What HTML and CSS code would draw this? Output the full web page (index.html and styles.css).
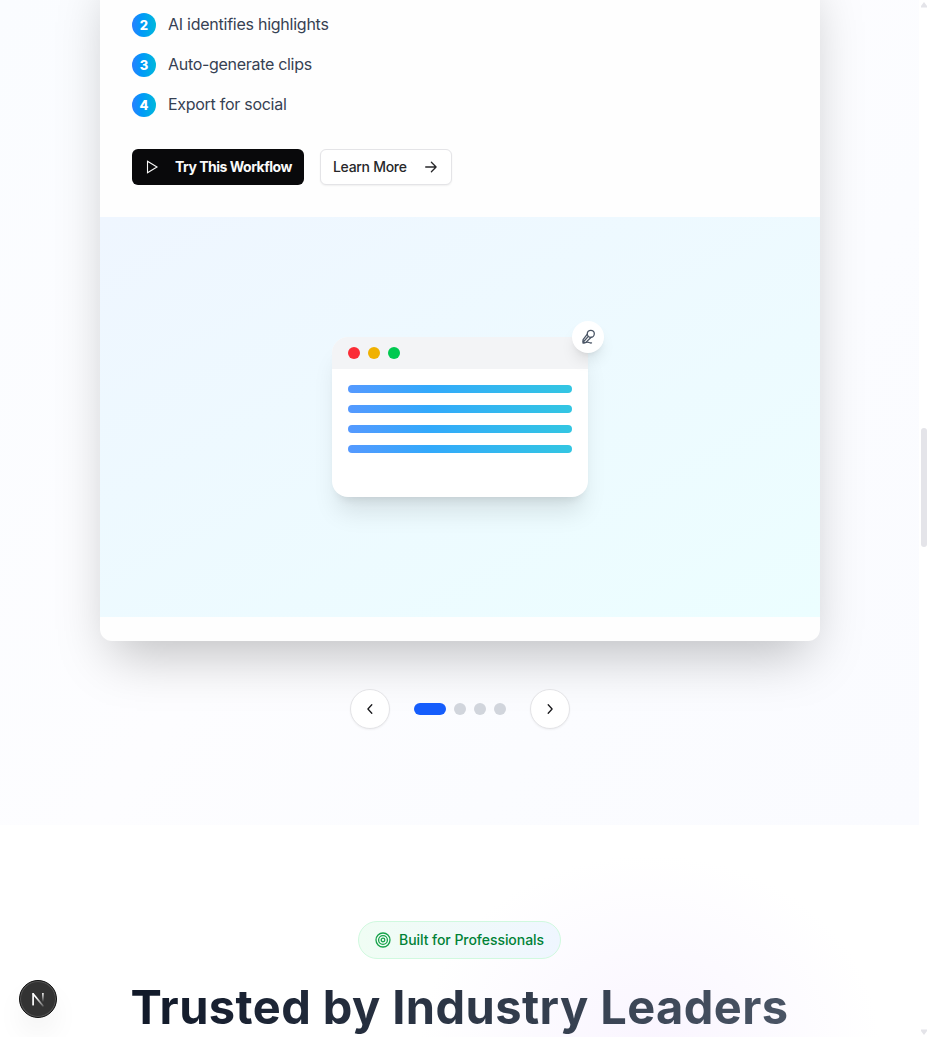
FILE: index.html
```html
<!DOCTYPE html>
<html lang="en">
<head>
<meta charset="utf-8">
<title>Workflows</title>
<link rel="stylesheet" href="styles.css">
</head>
<body>
<div class="page">
  <main class="content">
    <section class="workflows">
      <article class="card">
        <div class="card-body">
          <ol class="steps">
            <li><span class="num">2</span><span class="s1">AI identifies highlights</span></li>
            <li><span class="num">3</span><span class="s2">Auto-generate clips</span></li>
            <li><span class="num">4</span><span class="s3">Export for social</span></li>
          </ol>
          <div class="actions">
            <button class="btn primary"><svg width="16" height="16" viewBox="0 0 16 16"><path d="M3.5 2.3v11.4L13 8z"/></svg><span>Try This Workflow</span></button>
            <button class="btn outline"><span>Learn More</span><svg width="16" height="16" viewBox="0 0 16 16"><path d="M2.7 8h10.4M8.4 3.3 13.1 8l-4.7 4.7"/></svg></button>
          </div>
        </div>
        <div class="visual">
          <div class="window">
            <div class="titlebar"><i class="red"></i><i class="yellow"></i><i class="green"></i></div>
            <div class="lines"><i></i><i></i><i></i><i></i></div>
            <div class="mic"><svg width="16" height="16" viewBox="0 0 16 16"><circle cx="10.8" cy="4.8" r="3.5"/><path d="M7.3 5.2 3.1 10.6Q2.5 13.6 3.1 14.2 4.9 14.4 6.4 12.9L11.2 8.3M3.3 13l5-5.6M3.2 14.2C5.4 13.6 7 12.7 8.5 13.3q1.6.9 3 .6"/></svg></div>
          </div>
        </div>
      </article>
      <nav class="pager">
        <button class="round"><svg width="16" height="16" viewBox="0 0 16 16"><path d="M9.8 3.8 5.9 8l3.9 4.2"/></svg></button>
        <div class="dots"><i class="active"></i><i></i><i></i><i></i></div>
        <button class="round"><svg width="16" height="16" viewBox="0 0 16 16"><path d="M6.2 3.8 10.1 8l-3.9 4.2"/></svg></button>
      </nav>
    </section>
    <section class="trusted">
      <div class="pill"><svg width="16" height="16" viewBox="0 0 16 16"><circle cx="8" cy="8" r="7"/><circle cx="8" cy="8" r="4.4"/><circle cx="8" cy="8" r="1.8"/></svg><span>Built for Professionals</span></div>
      <h2>Trusted by Industry Leaders</h2>
    </section>
  </main>
  <div class="scrollbar">
    <svg width="6" height="6" viewBox="0 0 6 6"><path d="M3 0 6 4v1.5H0V4z"/></svg>
    <div class="thumb"></div>
    <svg width="6" height="6" viewBox="0 0 6 6"><path d="M0 .5h6V2L3 6 0 2z"/></svg>
  </div>
</div>
<div class="dev"><svg width="36" height="36" viewBox="0 0 36 36"><defs><linearGradient id="n1" x1="0" y1="12" x2="0" y2="24" gradientUnits="userSpaceOnUse"><stop stop-color="#fff"/><stop offset=".75" stop-color="#fff" stop-opacity="0"/></linearGradient><linearGradient id="n2" x1="17" y1="16" x2="24" y2="25" gradientUnits="userSpaceOnUse"><stop stop-color="#fff"/><stop offset="1" stop-color="#fff" stop-opacity=".2"/></linearGradient></defs><path d="M13.1 23.7V12.8" stroke="#fff" stroke-width="1.7"/><path d="M13.1 12.8 22.9 24.8" stroke="url(#n2)" stroke-width="1.7"/><path d="M22.1 12h1.6v12h-1.6z" fill="url(#n1)"/></svg></div>
</body>
</html>
```
FILE: styles.css
```css
* { box-sizing: border-box; }
body { margin: 0; height: 1037px; overflow: hidden; background: #fff; font-family: Inter, "Liberation Sans", sans-serif; }
svg { display: block; flex: none; fill: none; stroke: currentColor; stroke-width: 1.3; stroke-linecap: round; stroke-linejoin: round; }
button { font-family: inherit; }
.page { display: flex; height: 1037px; overflow: hidden; }
.content { width: 919px; overflow: hidden; }
.workflows { height: 825px; padding: 0 99px 0 100px; overflow: hidden; background: linear-gradient(125deg, #fafcff 0%, #fdfdff 45%, #fbfcff 70%, #fafbff 100%); }
.card { height: 681px; margin-top: -40px; border-radius: 12px; background: #fefefe; box-shadow: 0 25px 50px -12px rgba(0,0,0,.25); }
.card-body { height: 257px; padding: 53px 32px 32px; }
.steps { display: flex; flex-direction: column; gap: 16px; margin: 0; padding: 0; list-style: none; }
.steps li { display: flex; align-items: center; gap: 12px; height: 24px; font-size: 16px; line-height: 22px; color: #364153; white-space: nowrap; }
.steps li > :last-child { height: 24px; }
.num { width: 24px; height: 24px; border-radius: 50%; background: linear-gradient(90deg, #2b7fff, #0099f9 40%, #00b8db); color: #fff; font-size: 13px; line-height: 24px; font-weight: 800; text-align: center; }
.s1 { letter-spacing: -.25px; }
.s2 { letter-spacing: -.3px; }
.s3 { letter-spacing: -.28px; }
.btn { display: flex; align-items: center; height: 36px; padding: 0 12px; border: 0; border-radius: 6px; font-size: 14px; font-weight: 500; white-space: nowrap; }
.btn span { padding-bottom: 1px; }
.actions { display: flex; gap: 16px; margin-top: 32px; }
.primary { width: 172px; gap: 15px; background: #09090b; color: #fafafa; font-weight: 700; letter-spacing: -.5px; }
.primary svg { stroke-linejoin: miter; stroke-width: 1.1; }
.outline { width: 132px; justify-content: space-between; background: #fff; border: 1px solid #e4e4e7; box-shadow: 0 1px 2px rgba(0,0,0,.06); color: #27272a; letter-spacing: -.3px; }
.visual { height: 400px; display: flex; align-items: center; justify-content: center; background: linear-gradient(152deg, #eff6ff, #ecfeff); }
.window { position: relative; width: 256px; height: 160px; border-radius: 16px; background: #fff; box-shadow: 0 20px 25px -5px rgba(0,0,0,.1), 0 8px 10px -6px rgba(0,0,0,.1); }
.titlebar { display: flex; align-items: center; gap: 8px; height: 32px; padding-left: 16px; background: #f3f4f6; border-radius: 16px 16px 0 0; }
.titlebar i { width: 12px; height: 12px; border-radius: 50%; }
.red { background: #fb2c36; }
.yellow { background: #f0b100; }
.green { background: #00c950; }
.lines { display: flex; flex-direction: column; gap: 12px; padding: 16px; }
.lines i { height: 8px; border-radius: 4px; background: linear-gradient(90deg, #5599ff, #33a9fb 36%, #33c6e2); }
.mic { position: absolute; top: -16px; right: -16px; display: flex; align-items: center; justify-content: center; width: 32px; height: 32px; border-radius: 50%; background: #fff; color: #4a5565; box-shadow: 0 10px 15px -3px rgba(0,0,0,.1), 0 4px 6px -4px rgba(0,0,0,.1); }
.pager { display: flex; align-items: center; justify-content: center; gap: 24px; margin-top: 48px; }
.round { display: flex; align-items: center; justify-content: center; width: 40px; height: 40px; padding: 0; border: 1px solid #e4e4e7; border-radius: 50%; background: #fff; color: #18181b; box-shadow: 0 1px 2px rgba(0,0,0,.05); }
.dots { display: flex; gap: 8px; }
.dots i { width: 12px; height: 12px; border-radius: 6px; background: #d1d5dc; }
.dots .active { width: 32px; background: #155dfc; }
.trusted { display: flex; flex-direction: column; align-items: center; height: 212px; padding-top: 96px; overflow: hidden; background: radial-gradient(ellipse 230px 190px at 650px 220px, #faf5ff 0%, #fcfaff 50%, #fff 100%); }
.pill { display: flex; align-items: center; gap: 8px; width: 203px; height: 38px; flex: none; padding: 0 16px; border: 1px solid #d0f9df; border-radius: 19px; background: linear-gradient(90deg, #f0fdf4, #eff6ff); color: #008236; font-size: 14px; font-weight: 500; letter-spacing: -.05px; white-space: nowrap; }
.pill span { padding-bottom: 1px; }
.pill svg { color: #16a34a; }
h2 { margin: 18px 0 0; font-size: 47px; line-height: 60px; font-weight: 700; letter-spacing: .42px; white-space: nowrap; color: transparent; background: linear-gradient(100deg, #101828, #4a5565); background-clip: text; -webkit-background-clip: text; }
.scrollbar { display: flex; flex-direction: column; width: 10px; padding: 2px 2px 2px; background: #fff; color: #e4e4e9; }
.scrollbar svg { stroke: none; fill: currentColor; }
.thumb { width: 6px; height: 119px; margin: 420px 0 auto; border-radius: 3px; background: #e4e4e9; }
.dev { position: absolute; left: 19px; top: 980px; width: 38px; height: 38px; padding: 1px; border-radius: 50%; background: #333; border: 1px solid #111; box-shadow: inset 0 0 0 1px #555, 0 16px 32px -8px rgba(0,0,0,.14); }
.dev svg { margin: -1px; stroke: none; }
```
